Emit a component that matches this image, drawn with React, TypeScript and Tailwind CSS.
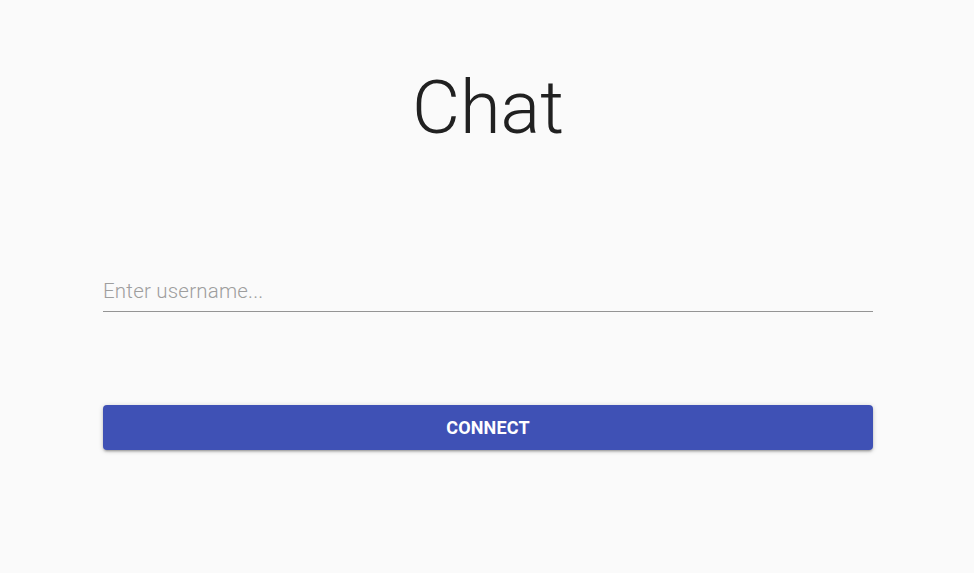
import React from "react";

export default function App() {
  return (
    <div className="min-h-[573px] w-full bg-[#fafafa] font-['Roboto','Liberation_Sans',sans-serif]">
      <div className="ml-[103px] flex w-[770px] flex-col">
        <h1 className="mt-[63px] text-center text-[74px] font-light leading-[90px] text-[#212121]">
          Chat
        </h1>
        <div className="mt-[120px] border-b border-[#949494]">
          <input
            className="h-[38px] w-full bg-transparent pb-[2px] text-[20.5px] font-light tracking-[0.01em] text-[#212121] outline-none placeholder:text-[#9e9e9e]"
            placeholder="Enter username..."
          />
        </div>
        <button className="mt-[93px] h-[45px] w-full rounded-[4px] bg-[#3f51b5] text-[18px] font-bold uppercase tracking-[0.01em] text-white shadow-[0_1px_5px_0_rgba(0,0,0,0.2),0_2px_2px_0_rgba(0,0,0,0.14),0_3px_1px_-2px_rgba(0,0,0,0.12)]">
          Connect
        </button>
      </div>
    </div>
  );
}
